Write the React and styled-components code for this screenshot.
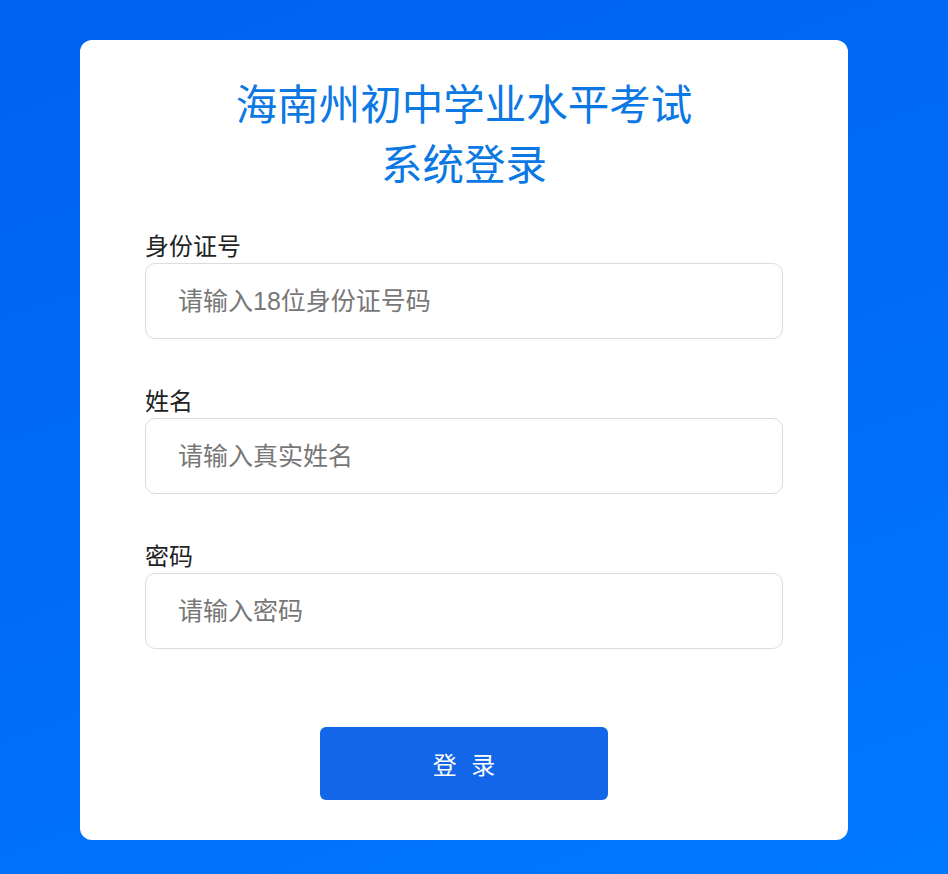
import styled, { createGlobalStyle } from "styled-components";

const GlobalStyle = createGlobalStyle`
  html, body {
    margin: 0;
    padding: 0;
  }
  body {
    font-family: "Liberation Sans", "Noto Sans CJK SC", sans-serif;
  }
  * {
    box-sizing: border-box;
  }
`;

const fields = [
  { label: "身份证号", placeholder: "请输入18位身份证号码", type: "text" },
  { label: "姓名", placeholder: "请输入真实姓名", type: "text" },
  { label: "密码", placeholder: "请输入密码", type: "password" },
];

const App = () => {
  return (
    <Page>
      <GlobalStyle />
      <Card>
        <Title>
          海南州初中学业水平考试
          <br />
          系统登录
        </Title>
        <Form onSubmit={(e) => e.preventDefault()}>
          {fields.map((f) => (
            <Field key={f.label}>
              <Label>{f.label}</Label>
              <Input type={f.type} placeholder={f.placeholder} />
            </Field>
          ))}
          <ButtonRow>
            <Button type="submit">登 录</Button>
          </ButtonRow>
        </Form>
      </Card>
    </Page>
  );
};

export default App;

const Page = styled.div`
  min-height: 100vh;
  padding: 40px 0 34px 80px;
  background: linear-gradient(160deg, #0063ef 0%, #006bf7 50%, #0079ff 100%);
`;

const Card = styled.div`
  width: 768px;
  height: 800px;
  background: #fff;
  border-radius: 12px;
  padding: 36px 65px 40px;
`;

const Title = styled.h1`
  margin: 0 0 37px;
  font-size: 41.5px;
  line-height: 60px;
  font-weight: 400;
  color: #0b78e3;
  text-align: center;
`;

const Form = styled.form`
  display: flex;
  flex-direction: column;
`;

const Field = styled.div`
  display: flex;
  flex-direction: column;
  margin-bottom: 49px;

  &:nth-last-child(2) {
    margin-bottom: 78px;
  }
`;

const Label = styled.label`
  font-size: 24px;
  line-height: 28px;
  color: #222;
  margin-bottom: 2px;
`;

const Input = styled.input`
  width: 638px;
  height: 76px;
  border: 1px solid #dcdcdc;
  border-radius: 10px;
  padding: 0 20px 0 32px;
  font-family: "Liberation Sans", "Noto Sans CJK SC", sans-serif;
  font-size: 25px;
  color: #333;
  outline: none;

  &::placeholder {
    color: #777;
  }
`;

const ButtonRow = styled.div`
  display: flex;
  justify-content: center;
`;

const Button = styled.button`
  width: 288px;
  height: 73px;
  border: none;
  border-radius: 6px;
  background: #1366e8;
  color: #fff;
  font-family: "Liberation Sans", "Noto Sans CJK SC", sans-serif;
  font-size: 24px;
  letter-spacing: 4px;
  padding: 0 0 0 4px;
  cursor: pointer;
`;
